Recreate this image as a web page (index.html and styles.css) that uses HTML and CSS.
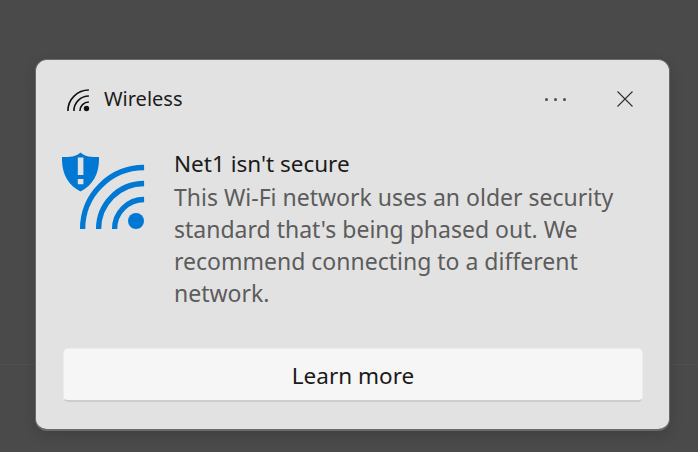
FILE: index.html
```html
<!DOCTYPE html>
<html lang="en">
<head>
<meta charset="utf-8">
<title>Wireless</title>
<link rel="stylesheet" href="styles.css">
</head>
<body>
<main class="dialog">
  <header class="titlebar">
    <svg class="wifi-small" width="24" height="24" viewBox="0 0 24 24" aria-hidden="true">
      <g fill="none" stroke="#111" stroke-width="1.600">
        <path d="M1.900 23a21 21 0 0 1 21-21"/>
        <path d="M7.900 23a15 15 0 0 1 15-15"/>
        <path d="M13.900 23a9 9 0 0 1 9-9"/>
      </g>
      <circle cx="20.500" cy="20.500" r="2.700" fill="#111"/>
    </svg>
    <span class="app-name">Wireless</span>
    <span class="more" aria-hidden="true"><i></i><i></i><i></i></span>
    <svg class="close" width="16" height="16" viewBox="0 0 16 16" aria-hidden="true">
      <path d="M0.500 0.500L15.500 15.500M15.500 0.500L0.500 15.500" stroke="#2e2e2e" stroke-width="1.100" fill="none"/>
    </svg>
  </header>
  <section class="content">
    <svg class="wifi-large" width="83" height="78" viewBox="0 0 83 78" aria-hidden="true">
      <g fill="none" stroke="#0078d4" stroke-width="5.300">
        <path d="M20.600 77a61.500 61.500 0 0 1 61.500-61.500"/>
        <path d="M36.600 77a45.500 45.500 0 0 1 45.500-45.500"/>
        <path d="M52.600 77a29.500 29.500 0 0 1 29.500-29.500"/>
      </g>
      <circle cx="74" cy="69" r="8" fill="#0078d4"/>
      <path d="M18.500 0.500C22 4 28 5.500 37 5C37.500 22 31 33 18.500 39.500C6 33 -0.500 22 0 5C9 5.500 15 4 18.500 0.500Z" fill="#0078d4"/>
      <path d="M15.800 5.500h5.600v17.500h-5.600zM15.800 27h5.600v5.300h-5.600z" fill="#e2e2e2"/>
    </svg>
    <div class="message">
      <h1 class="heading">Net1 isn't secure</h1>
      <p class="description">This Wi-Fi network uses an older security standard that's being phased out. We recommend connecting to a different network.</p>
    </div>
  </section>
  <button class="action" type="button">Learn more</button>
</main>
</body>
</html>
```
FILE: styles.css
```css
* {
  box-sizing: border-box;
}

html,
body {
  height: 100%;
}

body {
  margin: 0;
  padding: 59px 28px 21px 35px;
  overflow: hidden;
  font-family: "Noto Sans", "Open Sans", sans-serif;
  background:
    linear-gradient(#505050, #505050) 0 364px / 100% 1px no-repeat,
    #4a4a4a;
}

.dialog {
  height: 372px;
  padding: 0 26px 0 27px;
  display: flex;
  flex-direction: column;
  background: #e2e2e2;
  border: 1px solid #6a6a6a;
  border-bottom-width: 2px;
  border-radius: 12px;
  box-shadow: 0 4px 14px rgba(0, 0, 0, 0.14);
}

.titlebar {
  height: 78px;
  display: flex;
  align-items: center;
}

.wifi-small {
  margin-left: 3px;
  margin-top: 1px;
}

.app-name {
  margin-left: 14px;
  margin-bottom: 2px;
  font-size: 20px;
  color: #1c1c1c;
}

.more {
  margin-left: auto;
  display: flex;
  gap: 6px;
}

.more i {
  width: 3px;
  height: 3px;
  border-radius: 50%;
  background: #4c4c4c;
}

.close {
  margin-left: 51px;
  margin-right: 10px;
}

.content {
  height: 210px;
  display: flex;
  align-items: flex-start;
}

.wifi-large {
  margin-left: -1px;
  margin-top: 14px;
  flex: none;
}

.message {
  margin-left: 29px;
  margin-top: 10px;
  width: 450px;
}

.heading {
  margin: 0;
  font-size: 22.500px;
  font-weight: 400;
  line-height: 32px;
  color: #1a1a1a;
}

.description {
  margin: 1px 0 0;
  font-size: 23px;
  line-height: 32px;
  color: #5c5c5c;
}

.action {
  height: 54px;
  width: 100%;
  padding: 2px 0 0;
  font: 400 22.500px "Noto Sans", "Open Sans", sans-serif;
  color: #1a1a1a;
  background: #f6f6f6;
  border: 1px solid #ececec;
  border-bottom: 2px solid #cdcdcd;
  border-radius: 5px;
}
```
